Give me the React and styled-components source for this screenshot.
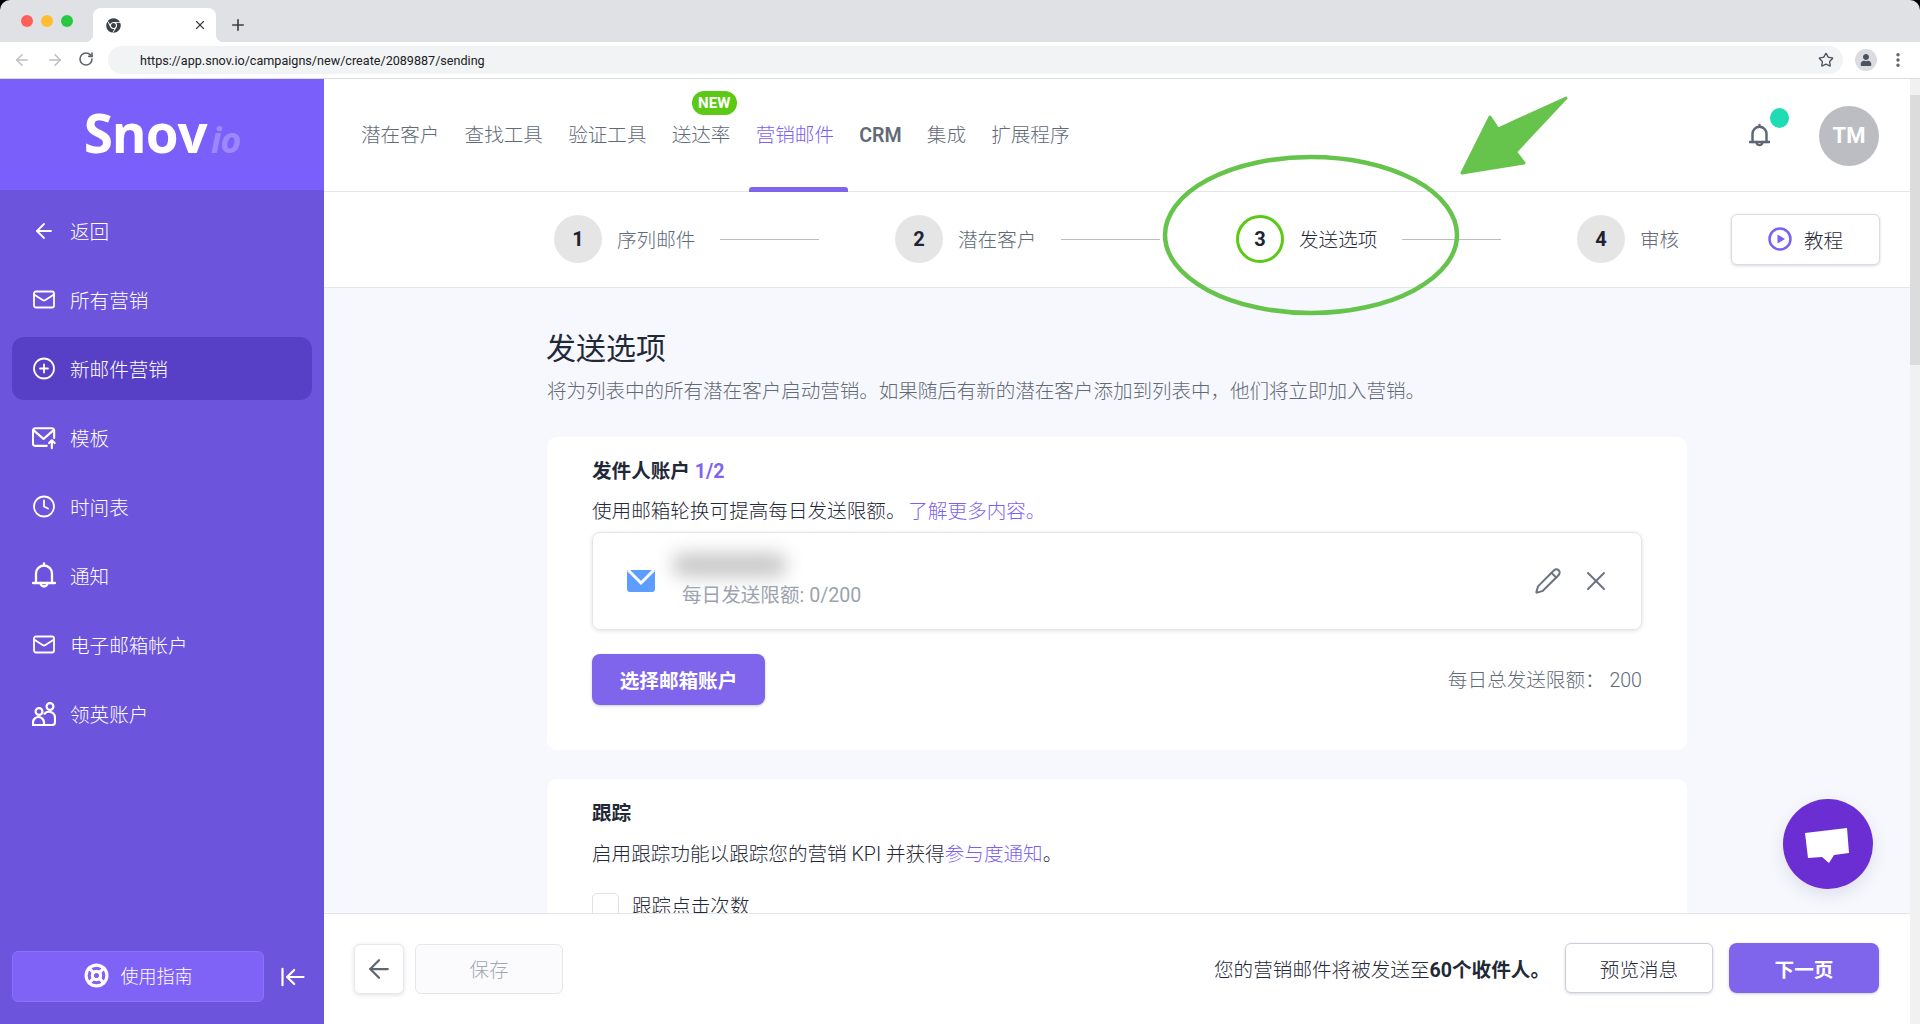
import React from 'react';
import styled, { createGlobalStyle } from 'styled-components';
import {
    ArrowLeft,
    ArrowLeftToLine,
    ArrowRight,
    CirclePlus,
    Clock,
    EllipsisVertical,
    LifeBuoy,
    Mail,
    Pencil,
    Plus,
    RotateCw,
    Star,
    X,
} from 'lucide-react';
import { FaChrome, FaUser } from 'react-icons/fa';

const GlobalStyle = createGlobalStyle`
    html, body {
        margin: 0;
        height: 100%;
        background: #000;
        overflow: hidden;
    }
    body {
        font-family: Roboto, "Noto Sans CJK SC", sans-serif;
        font-size: 19.6px;
        font-weight: 300;
        color: #1f2937;
    }
    * {
        box-sizing: border-box;
    }
`;

const Page = styled.div`
    position: relative;
    display: flex;
    flex-direction: column;
    width: 1920px;
    height: 1024px;
    overflow: hidden;
`;

const TabStrip = styled.div`
    display: flex;
    align-items: flex-end;
    height: 42px;
    padding-left: 21px;
    background: #dfe1e5;
    border-radius: 10px 10px 0 0;
`;

const Lights = styled.div`
    display: flex;
    gap: 8px;
    align-self: flex-start;
    margin-top: 15px;
`;

const Light = styled.span`
    width: 12px;
    height: 12px;
    border-radius: 50%;
    background: ${(p) => p.$color};
`;

const Tab = styled.div`
    position: relative;
    display: flex;
    align-items: center;
    justify-content: space-between;
    width: 123px;
    height: 34px;
    margin-left: 20px;
    padding: 0 9px 0 13px;
    background: #fff;
    border-radius: 8px 8px 0 0;
    color: #3c4043;

    &::before,
    &::after {
        content: '';
        position: absolute;
        bottom: 0;
        width: 8px;
        height: 8px;
    }
    &::before {
        left: -8px;
        background: radial-gradient(circle at 0 0, transparent 8px, #fff 8.5px);
    }
    &::after {
        right: -8px;
        background: radial-gradient(circle at 100% 0, transparent 8px, #fff 8.5px);
    }
`;

const NewTab = styled.div`
    display: flex;
    align-self: center;
    margin: 8px 0 0 13px;
    color: #3c4043;
`;

const Toolbar = styled.div`
    display: flex;
    align-items: center;
    height: 37px;
    padding: 0 13px 0 13px;
    background: #fff;
    border-bottom: 1px solid #dcdcdc;
`;

const NavGlyphs = styled.div`
    display: flex;
    gap: 14.5px;
    width: 95px;
`;

const AddressBar = styled.div`
    display: flex;
    align-items: center;
    justify-content: space-between;
    width: 1735px;
    height: 28px;
    padding: 0 9px 0 32px;
    background: #f1f3f4;
    border-radius: 14px;
    font-size: 12.6px;
    font-weight: 400;
    color: #202124;
`;

const ProfileDot = styled.div`
    display: flex;
    align-items: center;
    justify-content: center;
    width: 22px;
    height: 22px;
    margin-left: 12px;
    border-radius: 50%;
    background: #dadce0;
    color: #4a5160;
`;

const Kebab = styled.div`
    display: flex;
    margin-left: 12px;
    color: #5f6368;
`;

const Body = styled.div`
    display: flex;
    flex: 1;
    min-height: 0;
    background: #fff;
`;

const Sidebar = styled.aside`
    display: flex;
    flex-direction: column;
    flex: none;
    width: 324px;
    background: #6c54dc;
    color: #fff;
`;

const LogoBar = styled.div`
    display: flex;
    align-items: center;
    justify-content: center;
    height: 111px;
    padding-bottom: 4px;
    background: #7a5ffa;
`;

const LogoMark = styled.div`
    display: flex;
    align-items: baseline;
    gap: 4px;
    font-family: "Open Sans", sans-serif;
    font-weight: 700;
    line-height: 1;
`;

const LogoText = styled.span`
    font-size: 53px;
    letter-spacing: -1px;
`;

const LogoSuffix = styled.span`
    font-size: 36px;
    font-style: italic;
    letter-spacing: -1px;
    color: #9c88fb;
`;

const SideNav = styled.nav`
    display: flex;
    flex-direction: column;
    gap: 6px;
    padding: 9px 12px 0;
`;

const SideItem = styled.a`
    display: flex;
    align-items: center;
    gap: 14px;
    height: 63px;
    padding-left: 20px;
    border-radius: 12px;
    background: ${(p) => (p.$active ? '#5840c6' : 'transparent')};
`;

const IconSlot = styled.span`
    display: flex;
    flex: none;
    align-items: center;
    justify-content: center;
    width: 24px;
    height: 24px;
`;

const SideFoot = styled.div`
    display: flex;
    align-items: center;
    gap: 15px;
    margin-top: auto;
    padding: 0 0 22px 12px;
`;

const GuideButton = styled.button`
    display: flex;
    align-items: center;
    justify-content: center;
    gap: 12px;
    width: 252px;
    height: 51px;
    padding: 0 0 3px;
    border: 1px solid #8a70fa;
    border-radius: 6px;
    background: #7f63f7;
    color: #fff;
    font: inherit;
    font-size: 18px;
`;

const Main = styled.main`
    display: flex;
    flex-direction: column;
    flex: 1;
    min-width: 0;
`;

const TopNav = styled.header`
    display: flex;
    flex: none;
    align-items: center;
    gap: 25.2px;
    height: 113px;
    padding: 1px 31px 0 37px;
    border-bottom: 1px solid #e4e6ea;
`;

const TopItem = styled.a`
    position: relative;
    color: ${(p) => (p.$active ? '#7b61f0' : '#626a77')};
    font-weight: ${(p) => (p.$strong ? 600 : 300)};
    line-height: 28px;
`;

const NewBadge = styled.span`
    position: absolute;
    top: -31px;
    left: 20px;
    width: 45px;
    height: 24px;
    border-radius: 12px;
    background: #5cc916;
    color: #fff;
    font-size: 15px;
    font-weight: 700;
    line-height: 24px;
    text-align: center;
`;

const ActiveBar = styled.span`
    position: absolute;
    bottom: -42px;
    left: -7px;
    right: -14px;
    height: 5px;
    border-radius: 3px 3px 0 0;
    background: #7f65ec;
`;

const TopRight = styled.div`
    display: flex;
    align-items: center;
    gap: 49px;
    margin-left: auto;
`;

const BellWrap = styled.div`
    position: relative;
    display: flex;
    color: #5f6673;
`;

const BellDot = styled.span`
    position: absolute;
    top: -15px;
    left: 21px;
    width: 19px;
    height: 20px;
    border-radius: 50%;
    background: #1fdcb4;
`;

const Avatar = styled.div`
    width: 60px;
    height: 60px;
    border-radius: 50%;
    background: #bbbdc2;
    color: #fff;
    font-size: 22px;
    font-weight: 700;
    line-height: 60px;
    text-align: center;
`;

const Stepper = styled.div`
    display: flex;
    flex: none;
    align-items: center;
    height: 96px;
    padding: 0 30px 1px 230px;
    border-bottom: 1px solid #e4e6ea;
`;

const Step = styled.div`
    display: flex;
    align-items: center;
    width: ${(p) => (p.$last ? 'auto' : '341px')};
`;

const StepCircle = styled.span`
    flex: none;
    width: 48px;
    height: 48px;
    border: ${(p) => (p.$current ? '3px solid #5cc916' : 'none')};
    border-radius: 50%;
    background: ${(p) => (p.$current ? '#fff' : '#e5e5e5')};
    color: #1d2433;
    font-size: 20px;
    font-weight: 700;
    line-height: ${(p) => (p.$current ? '42px' : '48px')};
    text-align: center;
`;

const StepLabel = styled.span`
    margin: 0 0 2px 15px;
    color: ${(p) => (p.$current ? '#1f2937' : '#626a77')};
`;

const StepLine = styled.span`
    width: 99px;
    height: 1px;
    margin-left: 25px;
    background: #bdbdbd;
`;

const TutorialButton = styled.button`
    display: flex;
    align-items: center;
    justify-content: center;
    gap: 12px;
    width: 149px;
    height: 51px;
    margin-left: auto;
    border: 1px solid #d9dce6;
    border-radius: 6px;
    background: #fff;
    box-shadow: 0 1px 3px rgba(60, 70, 100, 0.2);
    color: #1f2937;
    font: inherit;
`;

const Content = styled.div`
    flex: 1;
    min-height: 0;
    overflow: hidden;
    padding: 41px 0 0 223px;
    background: #f7f8fd;
`;

const Title = styled.h1`
    margin: 0 0 0 -1px;
    font-size: 30px;
    font-weight: 400;
    line-height: 40px;
    color: #1f2937;
`;

const Subtitle = styled.p`
    margin: 9px 0 0;
    letter-spacing: -0.08px;
    color: #626a77;
    line-height: 28px;
`;

const Card = styled.section`
    width: 1140px;
    margin-top: ${(p) => p.$top}px;
    padding: 23px 45px 45px;
    border-radius: 10px;
    background: #fff;
`;

const CardTitle = styled.h2`
    margin: 0;
    font-size: 19.6px;
    font-weight: 700;
    line-height: 24px;
    color: #1f2937;
`;

const Count = styled.span`
    color: #7f65ec;
`;

const CardText = styled.p`
    margin: ${(p) => p.$top}px 0 0;
    line-height: 28px;
    color: #1f2937;
`;

const Link = styled.a`
    margin-left: ${(p) => p.$shift || 0}px;
    color: #7b61f0;
`;

const AccountBox = styled.div`
    display: flex;
    align-items: center;
    height: 98px;
    margin-top: 6px;
    padding: 0 29px 0 34px;
    border: 1px solid #e5e5e8;
    border-radius: 8px;
    box-shadow: 0 1px 4px rgba(50, 50, 70, 0.14);
`;

const AccountInfo = styled.div`
    display: flex;
    flex-direction: column;
    margin: 0 auto 0 16px;
`;

const BlurredName = styled.div`
    width: 115px;
    height: 24px;
    margin: 0 0 6px 1px;
    border-radius: 12px;
    background: #c8c8c8;
    filter: blur(9px);
`;

const Limit = styled.span`
    margin-left: 11px;
    font-weight: 400;
    color: #9ca3af;
    line-height: 26px;
`;

const BoxActions = styled.div`
    display: flex;
    align-items: center;
    gap: 18px;
    color: #6b7280;
`;

const CardFoot = styled.div`
    display: flex;
    align-items: center;
    justify-content: space-between;
    margin-top: 24px;
    color: #626a77;
`;

const DailyTotal = styled.span`
    margin-bottom: 2px;
`;

const PrimaryButton = styled.button`
    width: ${(p) => p.$width}px;
    height: ${(p) => p.$height}px;
    border: none;
    border-radius: 8px;
    background: #7f65ec;
    box-shadow: 0 1px 3px rgba(60, 50, 120, 0.25);
    color: #fff;
    font: inherit;
    font-weight: 700;
`;

const CheckRow = styled.label`
    display: flex;
    align-items: flex-start;
    gap: 13px;
    margin-top: 24px;
    line-height: 28px;
`;

const CheckBox = styled.span`
    width: 27px;
    height: 27px;
    border: 1px solid #dfe1e6;
    border-radius: 5px;
    background: #fff;
`;

const Footer = styled.footer`
    display: flex;
    flex: none;
    align-items: center;
    height: 111px;
    padding: 0 31px 0 30px;
    border-top: 1px solid #e4e6ea;
    background: #fff;
`;

const BackButton = styled.button`
    display: flex;
    align-items: center;
    justify-content: center;
    width: 50px;
    height: 50px;
    padding: 0;
    border: 1px solid #e8e9ee;
    border-radius: 6px;
    background: #fff;
    box-shadow: 0 1px 4px rgba(50, 50, 70, 0.15);
    color: #5f6673;
`;

const SaveButton = styled.button`
    width: 148px;
    height: 50px;
    margin-left: 11px;
    padding: 0 0 2px;
    border: 1px solid #e5e7eb;
    border-radius: 6px;
    background: #fbfbfd;
    color: #a3a8b0;
    font: inherit;
`;

const FootRight = styled.div`
    display: flex;
    align-items: center;
    margin: 0 0 2px auto;
`;

const Recipients = styled.span`
    margin-right: 15px;
    color: #1f2937;
`;

const Strong = styled.strong`
    font-weight: 700;
`;

const OutlineButton = styled.button`
    width: 148px;
    height: 50px;
    margin-right: 16px;
    border: 1px solid #c9d0dc;
    border-radius: 6px;
    background: #fff;
    box-shadow: 0 1px 3px rgba(60, 70, 100, 0.2);
    color: #1f2937;
    font: inherit;
`;

const ScrollTrack = styled.div`
    flex: none;
    width: 10px;
    padding-top: 16px;
    background: #f1f1f1;
`;

const ScrollThumb = styled.div`
    height: 270px;
    background: #dcdcdc;
`;

const ChatBubble = styled.div`
    position: absolute;
    left: 1783px;
    top: 799px;
    width: 90px;
    height: 90px;
    border-radius: 50%;
    background: #6a2ed3;
    box-shadow: 0 6px 16px rgba(60, 40, 120, 0.12);
`;

const Annotation = styled.svg`
    position: absolute;
    left: 0;
    top: 0;
    pointer-events: none;
`;

const MailUpIcon = () => (
    <svg width="26" height="24" viewBox="0 0 26 24" fill="none" stroke="currentColor" strokeWidth="2.300" strokeLinecap="round" strokeLinejoin="round">
        <path d="M24 12V4a2.500 2.500 0 0 0-2.500-2.500h-18A2.500 2.500 0 0 0 1 4v14a2.500 2.500 0 0 0 2.500 2.500H16" />
        <path d="M1.500 3.500 12.500 13l11-9.500" />
        <path d="M21.500 23v-8M18.500 17.500l3-3 3 3" />
    </svg>
);

const BellIcon = ({ width = 24, height = 27, weight = 2.3 }) => (
    <svg width={width} height={height} viewBox="0 0 24 27" fill="none" stroke="currentColor" strokeWidth={weight} strokeLinecap="round" strokeLinejoin="round">
        <path d="M12 1.500v2" />
        <path d="M4 21V11.500a8 8 0 0 1 16 0V21" />
        <path d="M1 21h22" />
        <path d="M8.500 21a3.500 3.500 0 0 0 7 0" />
    </svg>
);

const PeopleIcon = () => (
    <svg width="24" height="24" viewBox="0 0 24 24" fill="none" stroke="currentColor" strokeWidth="2.200" strokeLinejoin="round">
        <circle cx="7" cy="9.500" r="3.400" />
        <circle cx="18" cy="4.500" r="3.400" />
        <path d="M1 23v-2.500a5.500 5.500 0 0 1 11 0V23Z" />
        <path d="M12 12.500a6 6 0 0 1 11 3V20a3 3 0 0 1-3 3h-8" />
    </svg>
);

const PlayIcon = () => (
    <svg width="24" height="24" viewBox="0 0 24 24">
        <circle cx="12" cy="12" r="10.500" fill="none" stroke="#7b61f0" strokeWidth="2.500" />
        <path d="M9.500 7.500 17 12l-7.500 4.500Z" fill="#7b61f0" />
    </svg>
);

const EnvelopeIcon = () => (
    <svg width="28" height="22" viewBox="0 0 28 22">
        <path d="M0 0h28v19a3 3 0 0 1-3 3H3a3 3 0 0 1-3-3Z" fill="#5c9dff" />
        <path d="M1 0 14 13 27 0" fill="none" stroke="#fff" strokeWidth="3" />
    </svg>
);

const sideItems = [
    { label: '返回', icon: <ArrowLeft size={30} strokeWidth={1.800} /> },
    { label: '所有营销', icon: <Mail size={29} strokeWidth={1.800} /> },
    { label: '新邮件营销', icon: <CirclePlus size={29} strokeWidth={1.800} />, active: true },
    { label: '模板', icon: <MailUpIcon /> },
    { label: '时间表', icon: <Clock size={29} strokeWidth={1.800} /> },
    { label: '通知', icon: <BellIcon /> },
    { label: '电子邮箱帐户', icon: <Mail size={29} strokeWidth={1.800} /> },
    { label: '领英账户', icon: <PeopleIcon /> },
];

const topItems = [
    { label: '潜在客户' },
    { label: '查找工具' },
    { label: '验证工具' },
    { label: '送达率', badge: true },
    { label: '营销邮件', active: true },
    { label: 'CRM', strong: true },
    { label: '集成' },
    { label: '扩展程序' },
];

const steps = ['序列邮件', '潜在客户', '发送选项', '审核'];

export default function App() {
    return (
        <Page>
            <GlobalStyle />
            <TabStrip>
                <Lights>
                    <Light $color="#ff5f57" />
                    <Light $color="#ffbd2e" />
                    <Light $color="#28c940" />
                </Lights>
                <Tab>
                    <FaChrome size={15} />
                    <X size={14} strokeWidth={2} />
                </Tab>
                <NewTab>
                    <Plus size={18} strokeWidth={2.200} />
                </NewTab>
            </TabStrip>
            <Toolbar>
                <NavGlyphs>
                    <ArrowLeft size={18} color="#bdbdbd" />
                    <ArrowRight size={18} color="#bdbdbd" />
                    <RotateCw size={16} color="#5f6368" strokeWidth={2.400} />
                </NavGlyphs>
                <AddressBar>
                    https://app.snov.io/campaigns/new/create/2089887/sending
                    <Star size={16} color="#4a5160" strokeWidth={2} />
                </AddressBar>
                <ProfileDot>
                    <FaUser size={12} />
                </ProfileDot>
                <Kebab>
                    <EllipsisVertical size={18} strokeWidth={2.600} />
                </Kebab>
            </Toolbar>
            <Body>
                <Sidebar>
                    <LogoBar>
                        <LogoMark>
                            <LogoText>Snov</LogoText>
                            <LogoSuffix>io</LogoSuffix>
                        </LogoMark>
                    </LogoBar>
                    <SideNav>
                        {sideItems.map((item) => (
                            <SideItem key={item.label} $active={item.active}>
                                <IconSlot>{item.icon}</IconSlot>
                                {item.label}
                            </SideItem>
                        ))}
                    </SideNav>
                    <SideFoot>
                        <GuideButton>
                            <LifeBuoy size={25} strokeWidth={3} />
                            使用指南
                        </GuideButton>
                        <ArrowLeftToLine size={28} strokeWidth={1.900} />
                    </SideFoot>
                </Sidebar>
                <Main>
                    <TopNav>
                        {topItems.map((item) => (
                            <TopItem key={item.label} $active={item.active} $strong={item.strong}>
                                {item.badge && <NewBadge>NEW</NewBadge>}
                                {item.label}
                                {item.active && <ActiveBar />}
                            </TopItem>
                        ))}
                        <TopRight>
                            <BellWrap>
                                <BellIcon width={21} height={25} weight={2.800} />
                                <BellDot />
                            </BellWrap>
                            <Avatar>TM</Avatar>
                        </TopRight>
                    </TopNav>
                    <Stepper>
                        {steps.map((label, i) => (
                            <Step key={label} $last={i === steps.length - 1}>
                                <StepCircle $current={i === 2}>{i + 1}</StepCircle>
                                <StepLabel $current={i === 2}>{label}</StepLabel>
                                {i < steps.length - 1 && <StepLine />}
                            </Step>
                        ))}
                        <TutorialButton>
                            <PlayIcon />
                            教程
                        </TutorialButton>
                    </Stepper>
                    <Content>
                        <Title>发送选项</Title>
                        <Subtitle>
                            将为列表中的所有潜在客户启动营销。如果随后有新的潜在客户添加到列表中，他们将立即加入营销。
                        </Subtitle>
                        <Card $top={31}>
                            <CardTitle>
                                发件人账户 <Count>1/2</Count>
                            </CardTitle>
                            <CardText $top={14}>
                                使用邮箱轮换可提高每日发送限额。 <Link $shift={-2}>了解更多内容。</Link>
                            </CardText>
                            <AccountBox>
                                <EnvelopeIcon />
                                <AccountInfo>
                                    <BlurredName />
                                    <Limit>每日发送限额: 0/200</Limit>
                                </AccountInfo>
                                <BoxActions>
                                    <Pencil size={28} strokeWidth={1.700} />
                                    <X size={32} strokeWidth={1.500} />
                                </BoxActions>
                            </AccountBox>
                            <CardFoot>
                                <PrimaryButton $width={173} $height={51}>选择邮箱账户</PrimaryButton>
                                <DailyTotal>每日总发送限额： 200</DailyTotal>
                            </CardFoot>
                        </Card>
                        <Card $top={29}>
                            <CardTitle>跟踪</CardTitle>
                            <CardText $top={15}>
                                启用跟踪功能以跟踪您的营销 KPI 并获得<Link>参与度通知</Link>。
                            </CardText>
                            <CheckRow>
                                <CheckBox />
                                跟踪点击次数
                            </CheckRow>
                        </Card>
                    </Content>
                    <Footer>
                        <BackButton>
                            <ArrowLeft size={30} strokeWidth={1.800} />
                        </BackButton>
                        <SaveButton>保存</SaveButton>
                        <FootRight>
                            <Recipients>
                                您的营销邮件将被发送至<Strong>60个收件人。</Strong>
                            </Recipients>
                            <OutlineButton>预览消息</OutlineButton>
                            <PrimaryButton $width={150} $height={50}>下一页</PrimaryButton>
                        </FootRight>
                    </Footer>
                </Main>
                <ScrollTrack>
                    <ScrollThumb />
                </ScrollTrack>
            </Body>
            <ChatBubble>
                <svg width="90" height="90" viewBox="0 0 90 90">
                    <path d="M22 34 64 29 66 54 51 56 46 64 39 58 25 59Z" fill="#fff" />
                </svg>
            </ChatBubble>
            <Annotation width="1920" height="1024" viewBox="0 0 1920 1024">
                <ellipse cx="1311" cy="235" rx="146" ry="78" fill="none" stroke="#66c34c" strokeWidth="4.500" />
                <path
                    d="M1462 173 1490 117 1498 129 1566 98 1515.500 152 1524 163Z"
                    fill="#66c34c"
                    stroke="#66c34c"
                    strokeWidth="3"
                    strokeLinejoin="round"
                />
            </Annotation>
        </Page>
    );
}
